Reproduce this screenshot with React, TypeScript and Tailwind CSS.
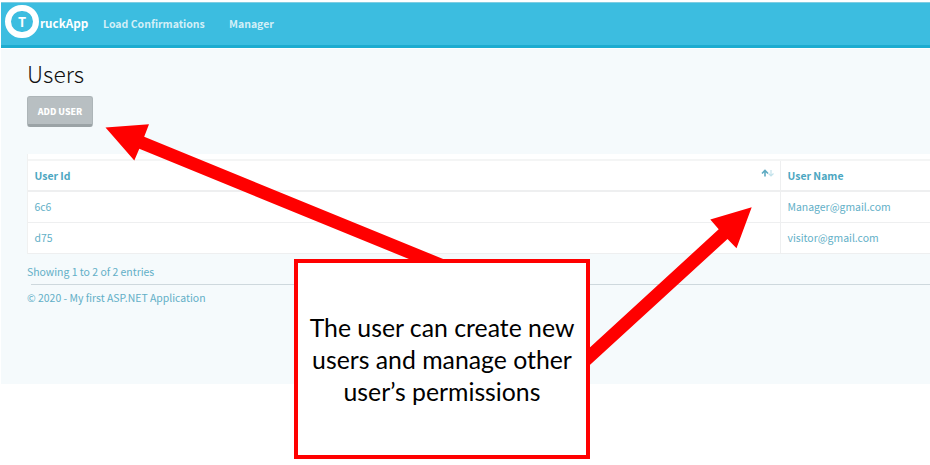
import React from "react";

const users = [
  { id: "6c6", name: "Manager@gmail.com" },
  { id: "d75", name: "visitor@gmail.com" },
];

function Navbar() {
  return (
    <header className="flex h-[46px] items-start border-t border-b-[3px] border-t-[#7fcde2] border-b-[#1dacd0] bg-[#3cbde0] pl-1 font-bold text-white">
      <div className="mt-[2px] flex h-[33px] w-[34px] shrink-0 items-center justify-center rounded-full border-[6px] border-white text-[13px] leading-none">
        <span>T</span>
      </div>
      <span className="mt-[11px] ml-px w-[63px] whitespace-nowrap text-[11.7px] leading-[18px]">ruckApp</span>
      <nav className="mt-[12px] flex text-[10.5px] leading-[18px] whitespace-nowrap text-[#d3eff7]">
        <a className="w-[126px]">Load Confirmations</a>
        <a>Manager</a>
      </nav>
    </header>
  );
}

function SortIcon() {
  return (
    <svg width="14" height="9" viewBox="0 0 14 9" fill="none" strokeWidth="1.6" className="mr-[5px] mb-[5px]">
      <path d="M4 7.5V1.8M1 4.5L4 1.5L7 4.5" stroke="#5fabc2" />
      <path d="M10 1V7M7.5 4.5L10 7L12.5 4.5" stroke="#c3e2eb" strokeWidth="1.2" />
    </svg>
  );
}

function UsersTable() {
  return (
    <section className="mt-[27px] ml-[26px] border-l border-[#f0f1f1] bg-white pt-[5px] leading-[18px]">
      <div className="flex h-[33px] border-t-2 border-b-2 border-t-[#f4f5f5] border-b-[#eeeff0] font-bold text-[#4ba6c1]">
        <div className="flex w-[753px] items-center justify-between border-r border-[#eeeff0] pl-[6.5px]">
          <span>User Id</span>
          <SortIcon />
        </div>
        <div className="flex items-center pl-[6.5px]">User Name</div>
      </div>
      {users.map((user) => (
        <div key={user.id} className="flex h-[31px] border-b border-[#eeeff0]">
          <div className="flex w-[753px] items-center border-r border-[#eeeff0] pl-[6.5px]">{user.id}</div>
          <div className="flex items-center pl-[6.5px]">{user.name}</div>
        </div>
      ))}
    </section>
  );
}

function Callout() {
  return (
    <>
      <svg className="absolute inset-0" width="930" height="465" viewBox="0 0 930 465" fill="#ff0000">
        <path d="M105.5 127.5L149 124.3L144.2 136.8L448 261V275L139.3 148.7L134.3 160.5Z" />
        <path d="M751.7 207.3L710.3 219.4L718.7 229.3L586 351V368.5L727.5 239L736.5 248.3Z" />
      </svg>
      <div className="absolute top-[259px] left-[294px] flex h-[200px] w-[296px] items-center justify-center border-4 border-[#ff0000] bg-white pt-[2px] text-center font-['Lato',sans-serif] text-[24.8px] leading-[32px] whitespace-nowrap text-black">
        <p>
          The user can create new
          <br />
          users and manage other
          <br />
          user’s permissions
        </p>
      </div>
    </>
  );
}

export default function App() {
  return (
    <div className="relative h-[465px] w-[930px] overflow-hidden bg-white pt-[2px] pl-px font-['Noto_Sans_CJK_SC',sans-serif] text-[10.45px] text-[#62afc7]">
      <Navbar />
      <main className="h-[336px] border-t border-white bg-[#f5fafc]">
        <h1 className="ml-[26px] pt-[9px] text-[22.8px] leading-[32px] font-light text-[#111]">Users</h1>
        <button className="mt-[6px] ml-[26px] block h-[31px] w-[66px] rounded-[3px] border border-b-[3px] border-[#adb5b8] border-b-[#9ba3a6] bg-[#b8bfc2] pt-[2px] text-[8.8px] leading-[26px] font-black text-white">
          ADD USER
        </button>
        <UsersTable />
        <p className="mt-[9px] ml-[26px] leading-[18px]">Showing 1 to 2 of 2 entries</p>
        <hr className="mt-[3px] ml-[30px] border-[#ced8dd]" />
        <p className="mt-[4px] ml-[26px] leading-[18px]">© 2020 - My first ASP.NET Application</p>
      </main>
      <Callout />
    </div>
  );
}
